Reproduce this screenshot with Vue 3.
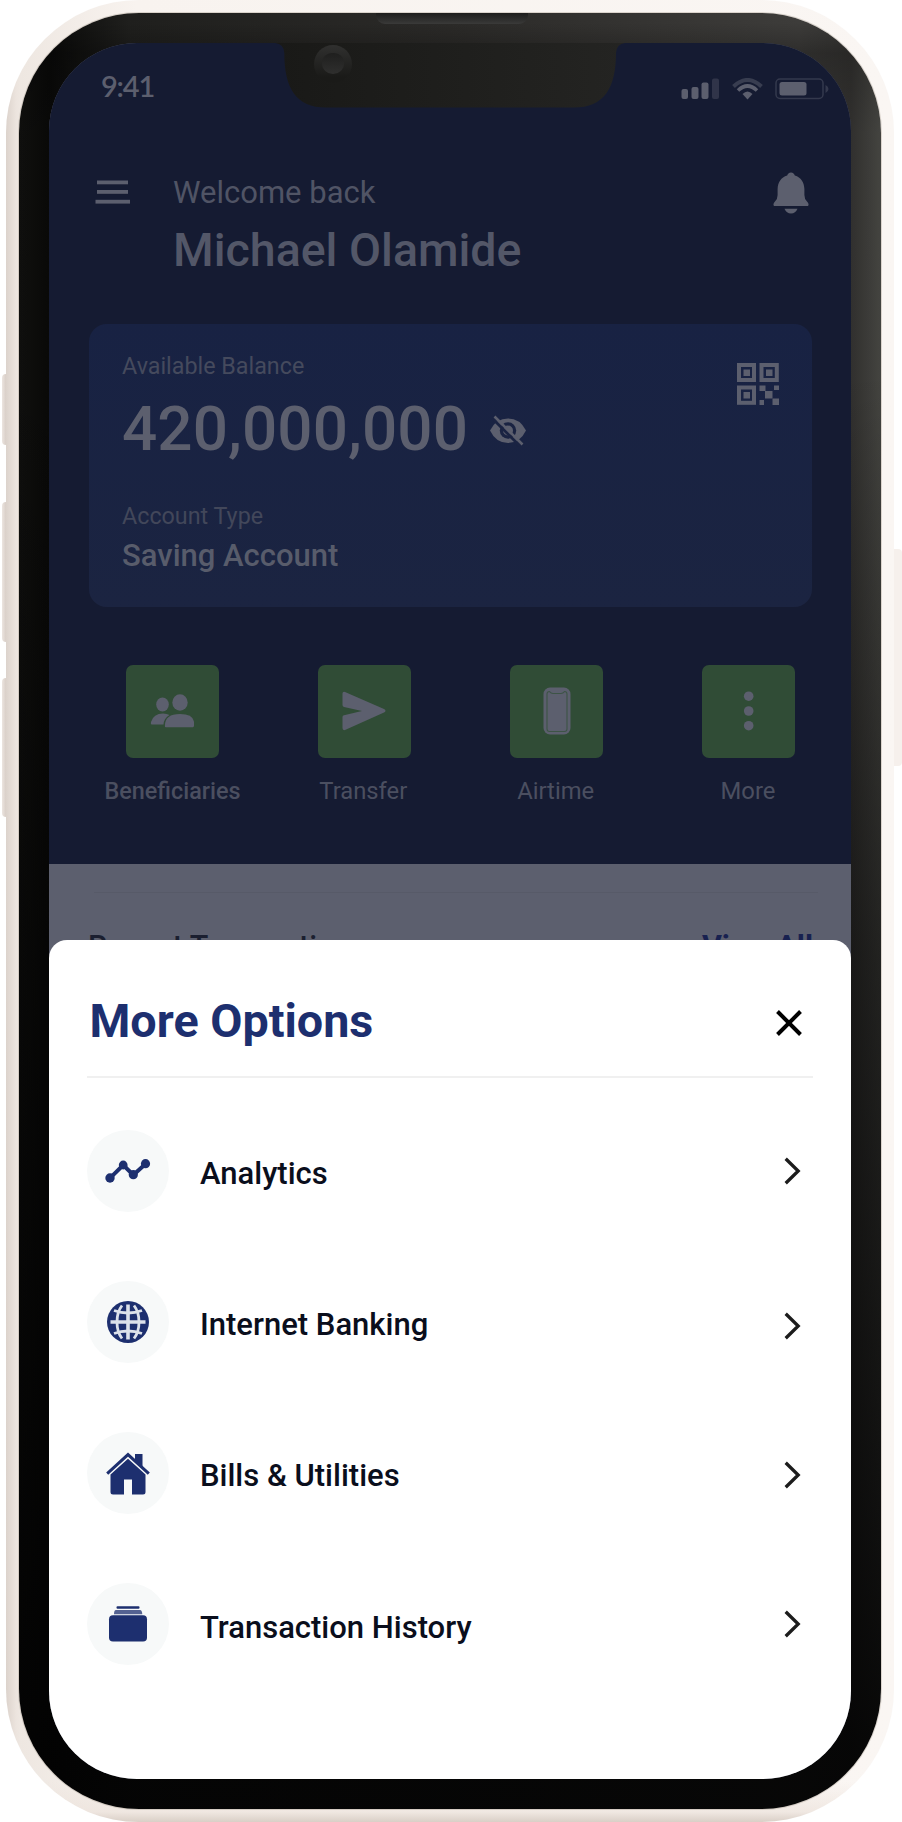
<script setup>
const actions = [
  { label: 'Beneficiaries', icon: 'people', strong: true },
  { label: 'Transfer', icon: 'send' },
  { label: 'Airtime', icon: 'phone' },
  { label: 'More', icon: 'dots' },
]

const options = [
  { label: 'Analytics', icon: 'chart', shift: 0 },
  { label: 'Internet Banking', icon: 'globe', shift: 4 },
  { label: 'Bills & Utilities', icon: 'home', shift: 2 },
  { label: 'Transaction History', icon: 'wallet', shift: 0 },
]
</script>

<template>
  <main class="stage">
    <span class="key key-silent"></span>
    <span class="key key-up"></span>
    <span class="key key-down"></span>
    <span class="key key-power"></span>

    <div class="frame">
      <div class="bezel">
        <span class="speaker"></span>
        <div class="screen">
          <section class="hero">
            <div class="status">
              <span class="clock">9:41</span>
              <svg class="signals" width="150" height="22" viewBox="0 0 150 22" fill="#5c5f6e">
                <rect x="0.500" y="11" width="6.500" height="10" rx="2" />
                <rect x="10.500" y="9" width="7" height="12" rx="2" />
                <rect x="20.500" y="4.500" width="7" height="16.500" rx="2" />
                <rect x="31" y="0.500" width="7" height="20.500" rx="2" opacity=".38" />
                <g fill="none" stroke="#5c5f6e">
                  <path d="M52.500 8.500Q66.500 -4.500 80.500 8.500" stroke-width="4" opacity=".5" />
                  <path d="M57 12.500Q66.500 3.500 76 12.500" stroke-width="3.600" />
                </g>
                <path d="M61.500 16Q66.500 11 71.500 16L66.500 21.500Z" />
                <rect x="95" y="1" width="47" height="19.500" rx="4" fill="none" stroke="#5c5f6e" stroke-width="1.500" opacity=".45" />
                <rect x="98.500" y="4" width="27" height="13.500" rx="2.500" />
                <path d="M144.500 7v8q3-1.500 3-4t-3-4Z" opacity=".45" />
              </svg>
            </div>

            <header class="header">
              <svg class="menu" width="36" height="24" viewBox="0 0 36 24" fill="#5c5f6e">
                <rect x="2" y="0.500" width="31" height="3.800" />
                <rect x="2" y="10" width="31" height="3.800" />
                <rect x="0.500" y="19.800" width="34.500" height="3.800" />
              </svg>
              <div class="greeting">
                <p class="welcome"><span>Welcome back</span></p>
                <h1 class="name"><span>Michael Olamide</span></h1>
              </div>
              <svg class="bell" width="36" height="42" viewBox="0 0 36 42" fill="#5c5f6e">
                <path d="M18 0.500C20 .500 21.500 2 21.800 3.600C28 5.500 31.200 10.500 31.400 17V23Q31.500 27.500 34 29.500Q36.500 32 35 34H1Q-.5 32 2 29.500Q4.500 27.500 4.600 23V17C4.800 10.500 8 5.500 14.200 3.600C14.500 2 16 .500 18 .500Z" />
                <path d="M11.500 36.700H24.500Q22.500 41.500 18 41.500T11.500 36.700Z" />
              </svg>
            </header>

            <article class="card">
              <div class="balance">
                <p class="caption available"><span>Available Balance</span></p>
                <div class="amount-row">
                  <strong class="amount">420,000,000</strong>
                  <svg class="eye" width="38" height="32" viewBox="0 0 38 32">
                    <path d="M1 15.500Q7 3.500 19 3.500T37 15.500Q31 28 19 28T1 15.500Z" fill="#5c5f6e" />
                    <circle cx="19" cy="15.500" r="8.200" fill="#1a2342" />
                    <circle cx="19" cy="15.500" r="5" fill="#5c5f6e" />
                    <path d="M3.500 3.500L31.500 31.500" stroke="#1a2342" stroke-width="3" />
                    <path d="M5.500 1.500L33.500 29.500" stroke="#5c5f6e" stroke-width="2.600" />
                  </svg>
                </div>
                <p class="caption type"><span>Account Type</span></p>
                <p class="account"><span>Saving Account</span></p>
              </div>
              <svg class="qr" width="42" height="42" viewBox="0 0 42 42" fill="#5c5f6e">
                <g fill="none" stroke="#5c5f6e" stroke-width="4">
                  <rect x="2" y="2" width="15" height="15" />
                  <rect x="24.500" y="2" width="15.300" height="15" />
                  <rect x="2" y="24.500" width="15" height="15.300" />
                </g>
                <rect x="6.500" y="6.500" width="6.500" height="6.500" />
                <rect x="29" y="6.500" width="6.500" height="6.500" />
                <rect x="6.500" y="29" width="6.500" height="6.500" />
                <rect x="22.500" y="22.500" width="6" height="5.500" />
                <rect x="37" y="22.500" width="5" height="4.500" />
                <rect x="28" y="28" width="7.500" height="7.500" />
                <rect x="22.500" y="37" width="4.500" height="5" />
                <rect x="35.500" y="35.500" width="6.500" height="6.500" />
              </svg>
            </article>

            <nav class="actions">
              <div v-for="a in actions" :key="a.label" class="action">
                <span class="tile">
                  <svg v-if="a.icon === 'people'" width="44" height="34" viewBox="0 0 44 34" fill="#5c5f6e">
                    <ellipse cx="12.500" cy="10.500" rx="6.300" ry="7" />
                    <ellipse cx="30" cy="8.500" rx="7.700" ry="8.200" />
                    <path d="M15 33Q14 20 30 20T44 32.200L43 33.300H16Z" />
                    <path d="M1.500 30.600Q.5 30 1 28Q3.500 19.500 13 19.500Q17 19.500 19.500 21Q14 24 13.500 30.600Z" />
                  </svg>
                  <svg v-else-if="a.icon === 'send'" width="44" height="40" viewBox="0 0 44 40" fill="#5c5f6e">
                    <path d="M0.500 2.500Q.5 .3 3 .9L42 18Q45 19.500 42 21.500L3 39Q.5 39.700 .5 37V26Q.5 24.500 2 24.200L20 20L2 16Q.5 15.500 .5 14Z" />
                  </svg>
                  <svg v-else-if="a.icon === 'phone'" width="28" height="48" viewBox="0 0 28 48">
                    <rect x=".5" y=".5" width="27" height="47" rx="6.500" fill="#5c5f6e" />
                    <path d="M4 7Q4 4.500 6.500 4.500Q8 6.500 10 6.500H18Q20 6.500 21.500 4.500Q24 4.500 24 7V42Q24 44.500 21.500 44.500H6.500Q4 44.500 4 42Z" fill="none" stroke="#3d5446" stroke-width="1.100" />
                  </svg>
                  <svg v-else width="12" height="40" viewBox="0 0 12 40" fill="#5c5f6e">
                    <circle cx="5.700" cy="5.200" r="4.800" />
                    <circle cx="5.700" cy="20" r="4.800" />
                    <circle cx="5.700" cy="34.700" r="4.800" />
                  </svg>
                </span>
                <span class="action-label" :class="{ strong: a.strong }">{{ a.label }}</span>
              </div>
            </nav>
          </section>

          <section class="recent">
            <div class="recent-row">
              <span>Recent Transactions</span>
              <b>View All</b>
            </div>
          </section>

          <section class="sheet">
            <div class="sheet-head">
              <h2><span>More Options</span></h2>
              <svg width="26" height="26" viewBox="0 0 26 26" fill="none" stroke="#000" stroke-width="4">
                <path d="M1.500 1.500L24.500 24.500M24.500 1.500L1.500 24.500" />
              </svg>
            </div>
            <ul class="options">
              <li v-for="o in options" :key="o.label">
                <span class="bubble">
                  <svg v-if="o.icon === 'chart'" width="46" height="24" viewBox="0 0 46 24" fill="#1d2f6f">
                    <path d="M5 19.200L18.200 6L28.300 16L41 4.500" fill="none" stroke="#1d2f6f" stroke-width="4" />
                    <circle cx="5" cy="19" r="4.700" />
                    <circle cx="18.200" cy="6" r="4.400" />
                    <circle cx="28.300" cy="15.700" r="4.600" />
                    <circle cx="40.500" cy="4.700" r="4.600" />
                  </svg>
                  <svg v-else-if="o.icon === 'globe'" width="42" height="42" viewBox="0 0 42 42">
                    <circle cx="21" cy="21" r="21" fill="#1d2f6f" />
                    <g fill="none" stroke="#dce1ea" stroke-width="2.800">
                      <path d="M3.500 21H38.500" stroke-width="3.600" />
                      <path d="M21 3.500V38.500" stroke-width="3.600" />
                      <path d="M15 4.500Q10 11 10 21T15 37.500M27 4.500Q32 11 32 21T27 37.500" />
                      <path d="M7 9.500Q21 14.500 35 9.500M7 32.500Q21 27.500 35 32.500" />
                    </g>
                  </svg>
                  <svg v-else-if="o.icon === 'home'" width="44" height="43" viewBox="0 0 44 43" fill="#1d2f6f">
                    <path d="M29 2H36.500V15L29 8Z" />
                    <path d="M1.200 21.700L22 2.600L42.800 21.700" fill="none" stroke="#1d2f6f" stroke-width="3" />
                    <path d="M22 6.800L39.500 22.500V40Q39.500 42.500 37 42.500H26V27.500H18V42.500H7Q4.500 42.500 4.500 40V22.500Z" />
                  </svg>
                  <svg v-else width="40" height="36" viewBox="0 0 40 36" fill="#1d2f6f">
                    <rect x="8.500" y="0.300" width="23" height="2.500" rx="1" />
                    <path d="M6 8.300Q6 4 8 4H32Q34 4 34.300 8.300Z" opacity=".75" />
                    <rect x="1" y="9.300" width="38" height="26.200" rx="4" />
                  </svg>
                </span>
                <span class="option-label">{{ o.label }}</span>
                <svg class="chevron" :style="{ transform: `translateY(${o.shift}px)` }" width="17" height="28" viewBox="0 0 17 28" fill="none" stroke="#1c1c1c" stroke-width="3.300">
                  <path d="M1.700 1.700L14.200 14L1.700 26.300" />
                </svg>
              </li>
            </ul>
          </section>

          <svg class="notch" width="350" height="65" viewBox="0 0 350 65">
            <defs>
              <linearGradient id="notch-fill" x1="0" x2="1">
                <stop offset="0" stop-color="#191917" />
                <stop offset="1" stop-color="#242422" />
              </linearGradient>
            </defs>
            <path d="M0 0H350Q341.500 1 341 10C341 45 329 64.600 299 64.600H51C21 64.600 9.300 45 9.300 10Q9 1 0 0Z" fill="url(#notch-fill)" />
          </svg>
          <span class="camera"></span>
        </div>
      </div>
    </div>
  </main>
</template>

<style>
html, body { margin: 0; background: #fff; overflow: hidden; }
</style>

<style scoped>
* { box-sizing: border-box; }
p, h1, h2, ul { margin: 0; padding: 0; list-style: none; }
svg { display: block; flex: none; }

.stage {
  position: relative;
  width: 902px;
  height: 1822px;
  padding: 0 8px 0 6px;
  overflow: hidden;
  background: #fff;
  font-family: Roboto, "Liberation Sans", sans-serif;
}

.key { position: absolute; left: 2px; width: 8px; background: linear-gradient(to right, #ece5e0, #d5cac3 60%); border-radius: 4px 0 0 4px; }
.key-silent { top: 374px; height: 71px; }
.key-up { top: 502px; height: 140px; }
.key-down { top: 678px; height: 139px; }
.key-power { left: 890px; width: 12px; top: 549px; height: 217px; background: #f6f0ec; border-radius: 0 4px 4px 0; }

.frame {
  position: relative;
  height: 1822px;
  padding: 13px;
  border-radius: 133px;
  background:
    linear-gradient(to top, rgba(214, 203, 194, .9) 0, rgba(236, 226, 219, .7) 10px, transparent 40px),
    linear-gradient(to right, #dcd3cc 0, #ece4de 10px, #eee7e1 14px, #f8f3ef 130px, #faf6f3 100%);
}
.bezel {
  position: relative;
  height: 1796px;
  padding: 30px;
  border-radius: 120px;
  background:
    linear-gradient(to bottom, transparent 20%, rgba(2, 2, 2, .5) 52%, rgba(2, 2, 2, .9) 96%),
    linear-gradient(to bottom, transparent 0, transparent 10px, rgba(0, 0, 0, .25) 40px, rgba(0, 0, 0, .1) 120px),
    linear-gradient(to right, #11110f 0, #0a0a09 30px, #1f1f1d 110px, #2b2a28 50%, #3d3c3a 780px, #363533 832px, #4a4a46 860px);
  box-shadow: 0 0 0 1px rgba(160, 148, 136, .35);
}
.speaker {
  position: absolute;
  left: 357px;
  top: 0;
  width: 152px;
  height: 11px;
  border-radius: 0 0 9px 9px;
  background: linear-gradient(#1d1d1c, #3a3a39);
}
.screen {
  position: relative;
  height: 1736px;
  display: flex;
  flex-direction: column;
  overflow: hidden;
  border-radius: 88px;
  background: #5c5f6e;
}
.notch { position: absolute; left: 226px; top: 0; }
.camera {
  position: absolute;
  left: 265px;
  top: 2px;
  width: 38px;
  height: 38px;
  padding: 8px;
  border-radius: 50%;
  background: linear-gradient(#30302f, #1a1a18 85%);
}
.camera::before {
  content: "";
  display: block;
  width: 22px;
  height: 21px;
  border-radius: 45% 45% 50% 50%;
  background: linear-gradient(#1f1f1e, #2f2f2e);
}

.hero { height: 821px; flex: none; padding: 23px 39px 0 40px; background: #151b32; }
.status { height: 40px; display: flex; align-items: flex-start; justify-content: space-between; padding-left: 12px; }
.clock { font: 600 29px/40px Lato, sans-serif; color: #5c5f6e; letter-spacing: -1.200px; }
.signals { margin: 12px -19px 0 0; }

.header { display: flex; padding: 66px 3px 0 6px; }
.menu { margin-top: 8px; }
.greeting { flex: 1; padding-left: 42px; color: #5c5f6e; }
.welcome { height: 40px; padding-top: 1px; font-size: 31px; line-height: 40px; white-space: nowrap; color: #505465; }
.name { height: 56px; margin-top: 10px; font-size: 46.5px; line-height: 56px; font-weight: 500; white-space: nowrap; color: #535768; }

.card {
  display: flex;
  justify-content: space-between;
  height: 283px;
  margin-top: 46px;
  padding: 27px 33px 0 33px;
  border-radius: 18px;
  background: linear-gradient(#182243, #1b2441);
}
.caption { height: 30px; font-size: 23.3px; line-height: 30px; color: #454a5d; }
.amount-row { display: flex; height: 70px; margin-top: 13px; }
.amount { font-size: 62px; line-height: 70px; font-weight: 500; color: #5c5f6e; letter-spacing: .1px; }
.eye { margin: 20.500px 0 0 21px; }
.type { margin-top: 37px; color: #42475a; }
.account { height: 36px; margin-top: 7px; font-size: 31px; line-height: 36px; font-weight: 500; color: #585c6b; }
.qr { margin-top: 12px; }

.actions { display: flex; justify-content: space-between; margin-top: 57.500px; }
.action { width: 148px; display: flex; flex-direction: column; align-items: center; gap: 18px; }
.action:first-child { margin-left: 9px; }
.action:last-child { margin-right: -11px; }
.tile { width: 93px; height: 93px; display: flex; align-items: center; justify-content: center; border-radius: 7px; background: #304c36; }
.action-label { margin-left: -2px; font-size: 23.800px; line-height: 30px; color: #4b4f60; white-space: nowrap; }
.strong { margin-left: 1px; font-size: 23.400px; font-weight: 500; }

.recent { height: 76px; flex: none; padding: 28px 33px 0 45px; overflow: hidden; }
.recent-row { display: flex; justify-content: space-between; border-top: 1px solid #575a68; padding-top: 36px; font-size: 30.500px; line-height: 36px; font-weight: 500; color: #1b1f30; }
.recent-row span { margin-left: -6px; }
.recent-row b { margin-right: 5px; font-weight: 700; color: #182150; }

.sheet { flex: 1; padding: 0 38px 0 38px; border-radius: 18px 18px 0 0; background: #fff; }
.sheet-head { height: 137.500px; display: flex; justify-content: space-between; border-bottom: 2px solid #f0f0f0; padding: 53px 11px 0 2.500px; }
h2 { font-size: 46.700px; line-height: 56px; font-weight: 700; color: #1d2f6f; }
.sheet-head svg { margin-top: 17px; }
.options { padding-top: 52px; display: flex; flex-direction: column; gap: 69.300px; }
.options li { height: 82px; display: flex; align-items: center; padding-right: 12.500px; }
.bubble { width: 82px; height: 82px; flex: none; display: flex; align-items: center; justify-content: center; border-radius: 50%; background: #f7f9f9; }
.option-label { flex: 1; padding: 6.500px 0 0 31px; font-size: 31px; line-height: 36px; font-weight: 500; color: #0a0e1c; white-space: nowrap; }
</style>
